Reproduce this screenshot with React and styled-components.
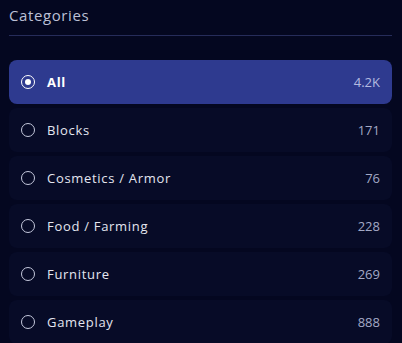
import styled, { createGlobalStyle } from 'styled-components'

const GlobalStyle = createGlobalStyle`
  html, body {
    margin: 0;
    padding: 0;
    background: #040720;
  }
  body {
    font-family: 'Open Sans', 'Liberation Sans', sans-serif;
  }
`

const Panel = styled.section`
  width: 402px;
  height: 343px;
  box-sizing: border-box;
  padding: 5px 10px 0 9px;
  background: #040720;
  overflow: hidden;
`

const Title = styled.h2`
  margin: 0;
  padding-bottom: 10px;
  font-size: 15px;
  font-weight: 400;
  line-height: 20px;
  color: #bcc0d6;
  letter-spacing: 0.6px;
  border-bottom: 1px solid #262c5a;
`

const List = styled.ul`
  list-style: none;
  margin: 24px 0 0;
  padding: 0;
  display: flex;
  flex-direction: column;
  gap: 4px;
`

const Row = styled.li`
  display: flex;
  align-items: center;
  height: 44px;
  padding: 0 12px;
  border-radius: 8px;
  background: ${({ $active }) => ($active ? '#2e3a8f' : '#070b27')};
`

const Radio = styled.span`
  box-sizing: border-box;
  width: 14px;
  height: 14px;
  border-radius: 50%;
  border: 1.5px solid ${({ $active }) => ($active ? '#ffffff' : '#c4c8dc')};
  display: flex;
  align-items: center;
  justify-content: center;
  flex-shrink: 0;

  &::after {
    content: '';
    width: 6px;
    height: 6px;
    border-radius: 50%;
    background: #ffffff;
    display: ${({ $active }) => ($active ? 'block' : 'none')};
  }
`

const Label = styled.span`
  flex: 1;
  margin-left: 12px;
  font-size: 13px;
  font-weight: ${({ $active }) => ($active ? 700 : 500)};
  color: ${({ $active }) => ($active ? '#ffffff' : '#e4e6f0')};
  letter-spacing: 0.7px;
`

const Count = styled.span`
  font-size: 13px;
  color: ${({ $active }) => ($active ? '#b4bae0' : '#a3a9c6')};
`

const categories = [
  { name: 'All', count: '4.2K' },
  { name: 'Blocks', count: '171' },
  { name: 'Cosmetics / Armor', count: '76' },
  { name: 'Food / Farming', count: '228' },
  { name: 'Furniture', count: '269' },
  { name: 'Gameplay', count: '888' },
]

function App() {
  const selected = 'All'
  return (
    <Panel>
      <GlobalStyle />
      <Title>Categories</Title>
      <List>
        {categories.map((cat) => {
          const active = cat.name === selected
          return (
            <Row key={`category-${cat.name}`} $active={active}>
              <Radio $active={active} />
              <Label $active={active}>{cat.name}</Label>
              <Count $active={active}>{cat.count}</Count>
            </Row>
          )
        })}
      </List>
    </Panel>
  )
}

export default App
